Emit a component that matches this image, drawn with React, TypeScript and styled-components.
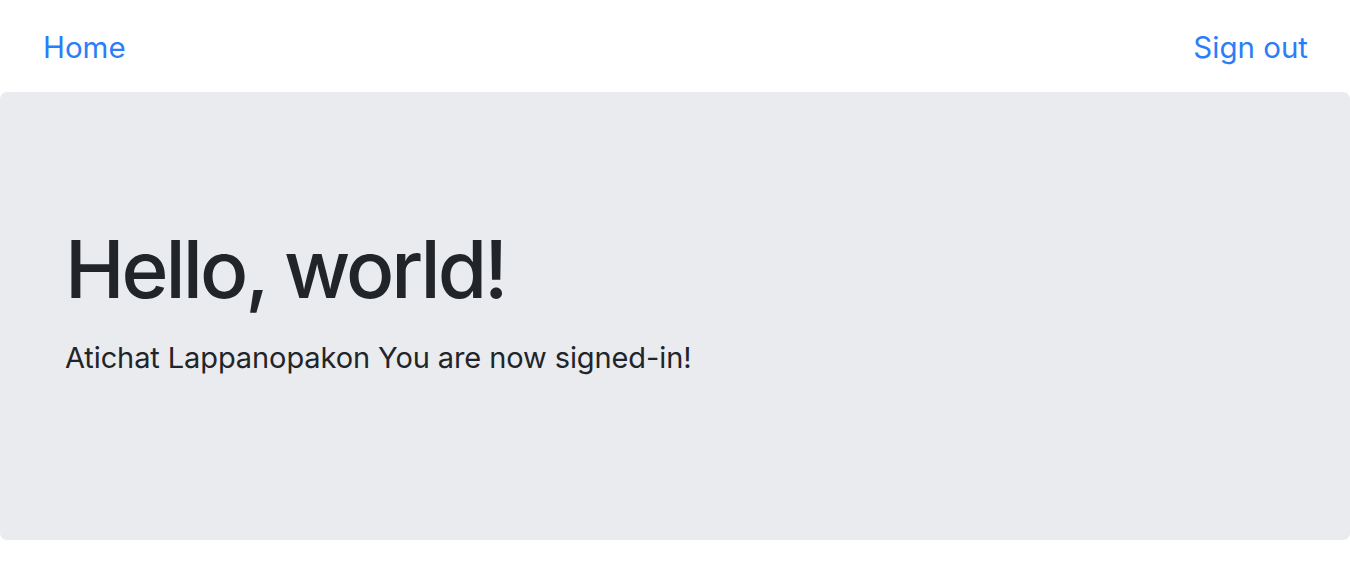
import React from "react";
import styled, { createGlobalStyle } from "styled-components";

const Global = createGlobalStyle`
  html, body { margin: 0; padding: 0; background: #ffffff; }
  body { font-family: Inter, "Noto Sans", "Liberation Sans", sans-serif; }
`;

const Page = styled.div`
  width: 1350px;
  display: flex;
  flex-direction: column;
`;

const NavBar = styled.nav`
  height: 92px;
  display: flex;
  align-items: center;
  justify-content: space-between;
  padding: 2px 42px 0 43px;
  box-sizing: border-box;
`;

const NavLink = styled.a`
  font-size: 29.5px;
  line-height: 1.5;
  color: #2b7ef8;
  text-decoration: none;
  letter-spacing: 0;
  cursor: pointer;
`;

const Jumbotron = styled.section`
  height: 448px;
  box-sizing: border-box;
  background: #e9ebef;
  border-radius: 7px;
  padding: 129px 65px 0 65px;
  display: flex;
  flex-direction: column;
`;

const Title = styled.h1`
  margin: 0;
  font-size: 80px;
  line-height: 96px;
  font-weight: 500;
  color: #212529;
  letter-spacing: -3px;
`;

const Lead = styled.p`
  margin: 18px 0 0 0;
  font-size: 29px;
  line-height: 45px;
  font-weight: 400;
  color: #212529;
  letter-spacing: -0.1px;
`;

export default function App() {
  return (
    <>
      <Global />
      <Page>
        <NavBar>
          <NavLink>Home</NavLink>
          <NavLink>Sign out</NavLink>
        </NavBar>
        <Jumbotron>
          <Title>Hello, world!</Title>
          <Lead>Atichat Lappanopakon You are now signed-in!</Lead>
        </Jumbotron>
      </Page>
    </>
  );
}
